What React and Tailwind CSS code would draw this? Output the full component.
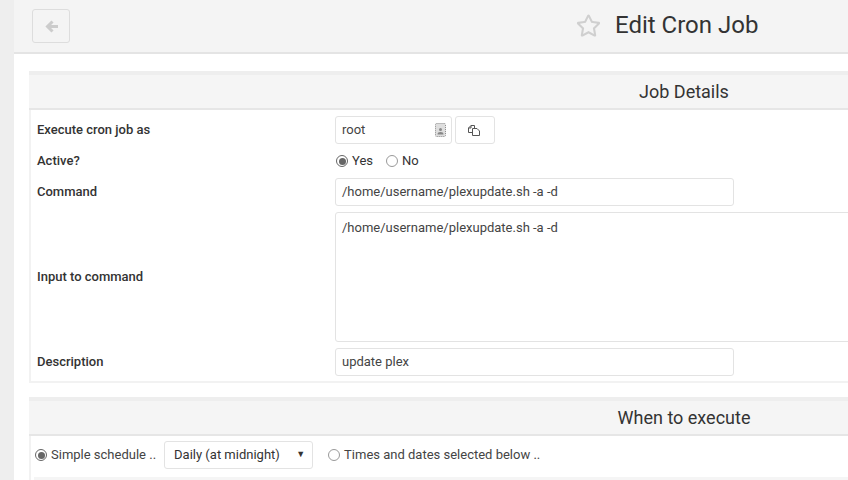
import React from "react";
import { FaRegStar } from "react-icons/fa";

function Radio({ on }) {
  return (
    <span className={`inline-flex items-center justify-center w-[12px] h-[12px] rounded-full border bg-white ${on ? "border-[#666]" : "border-[#999]"}`}>
      {on && <span className="block w-[7px] h-[7px] rounded-full bg-[#666]" />}
    </span>
  );
}

function Row({ label, className = "", children }) {
  return (
    <div className={`flex items-center ${className}`}>
      <div className="w-[298px] shrink-0 text-[13px] font-medium text-[#333]">{label}</div>
      <div className="flex-1 min-w-0 flex items-center">{children}</div>
    </div>
  );
}

function Field({ value, w = "w-[399px]" }) {
  return (
    <div className={`${w} h-[28px] flex items-center px-[6px] border border-[#e3e3e3] rounded-[3px] bg-white text-[13px] text-[#444]`}>{value}</div>
  );
}

function PanelHead({ title }) {
  return (
    <div className="h-[35px] flex items-center justify-center bg-[#f5f5f5] border-b-2 border-[#e6e6e6] text-[18px] text-[#333]">{title}</div>
  );
}

export default function App() {
  return (
    <div className="w-[848px] h-[480px] overflow-hidden bg-white flex" style={{ fontFamily: "Roboto, sans-serif" }}>
      <div className="w-[14px] shrink-0 bg-[#eeeeee]" />
      <div className="w-[1344px] shrink-0">
        <div className="h-[54px] flex items-center bg-[#f4f4f4] border-b-2 border-[#e4e4e4] relative">
          <div className="ml-[18px] w-[38px] h-[34px] flex items-center justify-center border border-[#ddd] rounded-[3px]">
            <svg width="13" height="13" viewBox="0 0 13 13" fill="none" stroke="#cccccc" strokeWidth="3">
              <path d="M7.5 1.5 2.5 6.5 7.5 11.5" />
              <path d="M3 6.5H13" />
            </svg>
          </div>
          <div className="absolute left-[562px] top-[11px] flex items-center">
            <FaRegStar className="text-[#cfcfcf] text-[25px]" />
            <span className="ml-[14px] text-[24px] leading-[28px] text-[#333]">Edit Cron Job</span>
          </div>
        </div>

        <div className="ml-[15px] mr-[19px] mt-[17px] border-t-4 border-[#eeeeee]">
          <PanelHead title="Job Details" />
          <div className="border-x-2 border-b-2 border-[#f2f2f2] px-[6px] pt-[5px] pb-[5px]">
            <Row label="Execute cron job as" className="pt-[1px]">
              <div className="w-[117px] h-[28px] flex items-center justify-between pl-[6px] pr-[5px] border border-[#e3e3e3] rounded-[3px] text-[13px] text-[#444]">
                root
                <svg width="11" height="14" viewBox="0 0 11 14">
                  <rect x="0.5" y="0.5" width="10" height="13" rx="1" fill="#dedede" stroke="#888" strokeDasharray="1 1" />
                  <circle cx="5.5" cy="6.5" r="1.5" fill="#888" />
                  <path d="M2.5 11.5c0-2 1.2-2.6 3-2.6s3 .6 3 2.6z" fill="#888" />
                </svg>
              </div>
              <div className="ml-[3px] w-[40px] h-[28px] flex items-center justify-center border border-[#e3e3e3] rounded-[3px]">
                <svg className="mr-[2px]" width="13" height="11" viewBox="0 0 13 11" fill="none" stroke="#555" strokeWidth="1">
                  <path d="M4.5 7.5H0.5V3L3 0.5H6.5V3" />
                  <path d="M3 0.5V3H0.5" />
                  <path d="M4.5 3.5H9L11.5 6V10.5H4.5Z" />
                </svg>
              </div>
            </Row>
            <Row label="Active?" className="mt-[2px] h-[30px]">
              <span className="ml-[1px] flex items-center"><Radio on /></span>
              <span className="ml-[4px] text-[13px] text-[#333]">Yes</span>
              <span className="ml-[13px] flex items-center"><Radio /></span>
              <span className="ml-[4px] text-[13px] text-[#333]">No</span>
            </Row>
            <Row label="Command" className="mt-[2px]">
              <Field value="/home/username/plexupdate.sh -a -d" />
            </Row>
            <Row label="Input to command" className="mt-[6px]">
              <div className="w-full h-[130px] border border-[#e3e3e3] rounded-[3px] px-[6px] pt-[7px] text-[13px] leading-[16px] text-[#444]">/home/username/plexupdate.sh -a -d</div>
            </Row>
            <Row label="Description" className="mt-[6px]">
              <Field value="update plex" />
            </Row>
          </div>
        </div>

        <div className="ml-[15px] mr-[19px] mt-[14px] border-t-4 border-[#eeeeee]">
          <PanelHead title="When to execute" />
          <div className="border-x-2 border-[#f2f2f2] pl-[4px] pt-[5px]">
            <div className="flex items-center h-[28px] text-[13px] text-[#444]">
              <Radio on />
              <span className="ml-[4px]">Simple schedule ..</span>
              <div className="ml-[8px] w-[149px] h-[28px] flex items-center justify-between pl-[9px] pr-[7px] border border-[#e3e3e3] rounded-[3px]">
                <span className="text-[#333]">Daily (at midnight)</span>
                <span className="text-[9px] text-[#333]">▼</span>
              </div>
              <span className="ml-[15px] flex items-center"><Radio /></span>
              <span className="ml-[4px]">Times and dates selected below ..</span>
            </div>
            <div className="mt-[8px] -ml-[1px] h-[10px] bg-[#f5f5f5]" />
          </div>
        </div>
      </div>
    </div>
  );
}
